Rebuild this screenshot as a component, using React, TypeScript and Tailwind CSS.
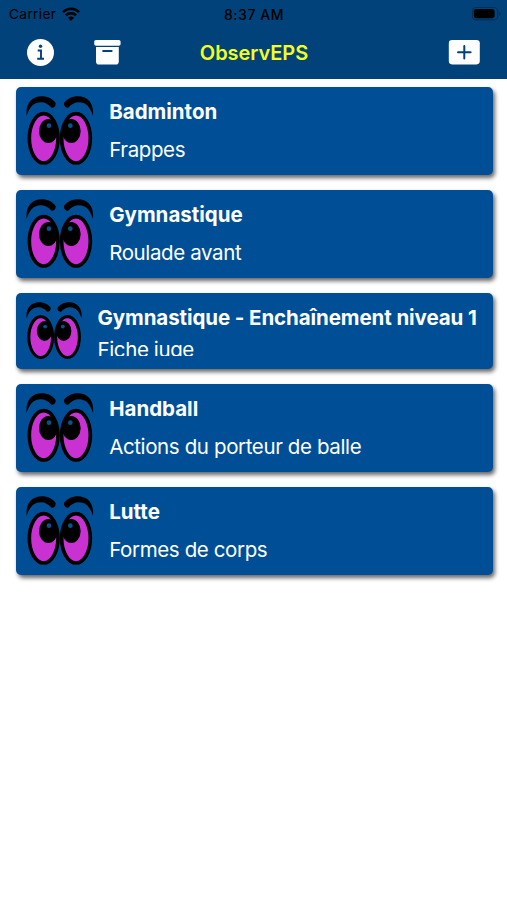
import React from 'react';
import { clsx } from 'clsx';

interface Activity {
  title: string;
  subtitle: string;
  compact?: boolean;
}

const activities: Activity[] = [
  { title: 'Badminton', subtitle: 'Frappes' },
  { title: 'Gymnastique', subtitle: 'Roulade avant' },
  { title: 'Gymnastique - Enchaînement niveau 1', subtitle: 'Fiche juge', compact: true },
  { title: 'Handball', subtitle: 'Actions du porteur de balle' },
  { title: 'Lutte', subtitle: 'Formes de corps' },
];

const EyesIcon: React.FC<{ className?: string }> = ({ className }) => (
  <svg viewBox="48 48 204 210" className={className} aria-hidden="true">
    <path d="M50 108C46 70 66 49 95 49C113 49 129 57 137 69C139 77 131 86 124 83C115 73 105 67 92 67C71 67 58 82 50 108Z" />
    <path d="M249 108C253 70 233 49 204 49C186 49 170 57 162 69C160 77 168 86 175 83C184 73 194 67 207 67C228 67 241 82 249 108Z" />
    <ellipse cx="101" cy="175" rx="43" ry="74" fill="#c931d3" stroke="#000" strokeWidth="11" />
    <ellipse cx="198" cy="175" rx="43" ry="74" fill="#c931d3" stroke="#000" strokeWidth="11" />
    <ellipse cx="115" cy="153" rx="28" ry="36" />
    <ellipse cx="184" cy="153" rx="28" ry="36" />
    <circle cx="117" cy="137" r="7" fill="#0b5288" />
    <circle cx="181" cy="137" r="7" fill="#0b5288" />
  </svg>
);

const InfoIcon = () => (
  <svg viewBox="0 0 27 27" className="h-[27px] w-[27px]" aria-hidden="true">
    <circle cx="13.5" cy="13.5" r="13.5" fill="#fff" />
    <circle cx="13.5" cy="7.3" r="1.7" fill="#004279" />
    <path d="M10.7 11.5H14V19.7M10.2 19.8H17" fill="none" stroke="#004279" strokeWidth="1.9" />
  </svg>
);

const ArchiveIcon = () => (
  <svg viewBox="0 0 27 25" className="h-[25px] w-[27px]" fill="#fff" aria-hidden="true">
    <rect x="0.2" y="0" width="26.4" height="5.8" rx="1.8" />
    <path d="M2 7H24.8V21.5Q24.8 24.6 21.7 24.6H5.1Q2 24.6 2 21.5Z" />
    <rect x="8.2" y="10.1" width="10.4" height="2" rx="1" fill="#004279" />
  </svg>
);

const AddIcon = () => (
  <svg viewBox="0 0 32 25" className="h-[25px] w-8" aria-hidden="true">
    <rect x="0.8" y="0.1" width="31" height="24.3" rx="3.3" fill="#fff" />
    <path d="M16.3 6V18.6M10 12.3H22.6" stroke="#004279" strokeWidth="2" strokeLinecap="round" />
  </svg>
);

const WifiIcon = () => (
  <svg viewBox="0 0 18 14" className="h-3.5 w-[18px]" fill="none" stroke="#000" strokeWidth="2.6" aria-hidden="true">
    <path d="M0.9 5.2C5.4 0.5 12.6 0.5 17.1 5.2" />
    <path d="M3.9 8.3C6.7 5.5 11.3 5.5 14.1 8.3" />
    <path d="M9 14L5.9 10.7C7.7 9.1 10.3 9.1 12.1 10.7Z" fill="#000" stroke="none" />
  </svg>
);

const BatteryIcon = () => (
  <svg viewBox="0 0 30 14" className="h-3.5 w-[30px]" aria-hidden="true">
    <rect x="0.3" y="0.5" width="25.4" height="12.4" rx="4" fill="none" stroke="#00305a" strokeWidth="1.2" />
    <rect x="1.8" y="2" width="20.8" height="9.2" rx="2.7" />
    <path d="M27.1 4.5C29.2 5.3 29.2 8.3 27.1 9.1Z" fill="#00305a" />
  </svg>
);

const StatusBar = () => (
  <div className="grid h-[27px] grid-cols-3 items-center pl-[9px] pr-[5px] text-black">
    <div className="flex items-center gap-[6px]">
      <span className="text-[13.7px] leading-5 tracking-[0.35px]">Carrier</span>
      <WifiIcon />
    </div>
    <span className="pr-[3px] pt-px text-center text-[14px] font-medium tracking-[0.55px]">8:37 AM</span>
    <div className="flex justify-end">
      <BatteryIcon />
    </div>
  </div>
);

const Header = () => (
  <header className="h-[79px] bg-[#004279]">
    <StatusBar />
    <div className="grid h-[51px] grid-cols-3 items-center px-[27px]">
      <div className="flex items-center gap-10">
        <button type="button" aria-label="Informations">
          <InfoIcon />
        </button>
        <button type="button" aria-label="Archives">
          <ArchiveIcon />
        </button>
      </div>
      <h1 className="pl-px text-center text-[20px] font-semibold tracking-[-0.05px] text-[#f4ff1f]">ObservEPS</h1>
      <div className="flex justify-end">
        <button type="button" aria-label="Ajouter">
          <AddIcon />
        </button>
      </div>
    </div>
  </header>
);

const ActivityCard: React.FC<{ activity: Activity }> = ({ activity }) => {
  const { title, subtitle, compact } = activity;

  return (
    <li
      className={clsx(
        'flex items-start rounded-[5px] bg-[#004f96] pl-[10.5px] pt-[9px] text-white shadow-[2px_3px_4px_rgba(0,0,0,0.6)]',
        compact ? 'h-[76.5px] gap-[15px]' : 'h-[88.5px] gap-[15.2px]'
      )}
    >
      <EyesIcon className={compact ? 'h-[58px] w-[56.5px] shrink-0' : 'h-[70px] w-[68px] shrink-0'} />
      <div className={clsx('whitespace-nowrap', compact && 'h-[54px] overflow-hidden')}>
        <h2 className={clsx('text-[20.5px] font-bold leading-8', compact ? 'tracking-[-0.09px]' : 'tracking-normal')}>
          {title}
        </h2>
        <p className={clsx('text-[20.5px] leading-8 tracking-[-0.38px]', compact ? 'mt-0' : 'mt-[6px]')}>{subtitle}</p>
      </div>
    </li>
  );
};

export default function App() {
  return (
    <div className="min-h-[900px] w-full bg-white font-[Inter,'Liberation_Sans',sans-serif]">
      <Header />
      <ul className="flex flex-col gap-[14.5px] pl-[15.5px] pr-[14.5px] pt-[7.5px]">
        {activities.map((activity) => (
          <ActivityCard key={`${activity.title}-${activity.subtitle}`} activity={activity} />
        ))}
      </ul>
    </div>
  );
}
